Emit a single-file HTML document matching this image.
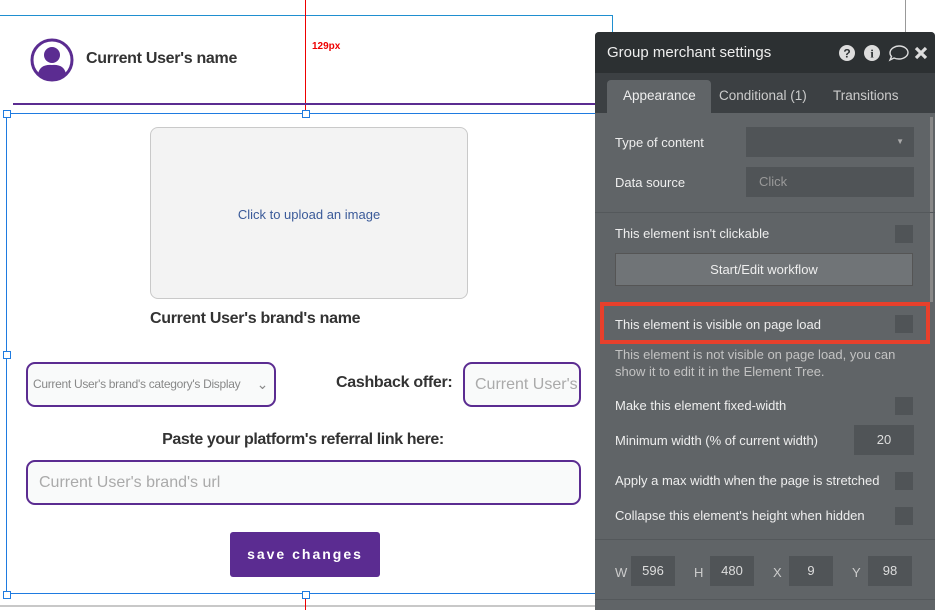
<!DOCTYPE html><html><head><style>
body{margin:0;width:943px;height:610px;position:relative;overflow:hidden;background:#fff;font-family:"Liberation Sans",sans-serif}
.a{position:absolute}
.p{font-family:"Liberation Sans",sans-serif;font-size:13px;color:#eee}
.cb{position:absolute;width:18px;height:18px;background:#505457}
.in{position:absolute;background:#505457;color:#ddd;font-size:13px;text-align:center;line-height:30px}
.pi{border:2px solid #5b2c91;border-radius:9px;box-sizing:border-box;background:#f9fafa}
</style></head><body>
<div class="a" style="left:0;top:15px;width:613px;height:1px;background:#1f8fd0"></div>
<div class="a" style="left:612px;top:15px;width:1px;height:592px;background:#1f8fd0"></div>
<div class="a" style="left:0;top:605px;width:613px;height:2px;background:#c8c8c8"></div>
<div class="a" style="left:905px;top:0;width:1px;height:32px;background:#999"></div>
<div class="a" style="left:305px;top:0;width:1px;height:113px;background:#e00"></div>
<div class="a" style="left:305px;top:594px;width:1px;height:16px;background:#e00"></div>
<div class="a" style="left:312px;top:41px;font-size:10px;color:#e00;font-weight:bold">129px</div>
<svg class="a" style="left:30px;top:38px" width="44" height="44" viewBox="0 0 44 44"><circle cx="22" cy="22" r="20" fill="#fff" stroke="#5b2c91" stroke-width="3"/><circle cx="22" cy="17" r="8" fill="#5b2c91"/><path d="M8 36 Q10 26 22 27 Q34 26 36 36 Q30 42 22 42 Q14 42 8 36Z" fill="#5b2c91"/></svg>
<div class="a" style="left:86px;top:50px;font-size:16px;color:#333;font-weight:bold;letter-spacing:-0.3px">Current User's name</div>
<div class="a" style="left:13px;top:103px;width:595px;height:2px;background:#5b2c91"></div>
<div class="a" style="left:6px;top:113px;width:600px;height:481px;border:1px solid #1f7be0;box-sizing:border-box"></div>
<div class="a" style="left:3px;top:110px;width:6px;height:6px;border:1px solid #1f7be0;background:#fff"></div>
<div class="a" style="left:302px;top:110px;width:6px;height:6px;border:1px solid #1f7be0;background:#fff"></div>
<div class="a" style="left:3px;top:351px;width:6px;height:6px;border:1px solid #1f7be0;background:#fff"></div>
<div class="a" style="left:3px;top:591px;width:6px;height:6px;border:1px solid #1f7be0;background:#fff"></div>
<div class="a" style="left:302px;top:591px;width:6px;height:6px;border:1px solid #1f7be0;background:#fff"></div>
<div class="a" style="left:150px;top:127px;width:318px;height:172px;background:#f3f3f3;border:1px solid #c9c9c9;border-radius:8px;box-sizing:border-box;text-align:center;line-height:174px;font-size:13px;color:#3a5a99">Click to upload an image</div>
<div class="a" style="left:150px;top:310px;font-size:16px;color:#333;font-weight:bold;letter-spacing:-0.3px">Current User's brand's name</div>
<div class="a pi" style="left:26px;top:362px;width:250px;height:45px;font-size:12px;color:#888;line-height:41px;padding-left:5px;letter-spacing:-0.3px">Current User's brand's category's Display<span style="position:absolute;right:6px;font-size:14px">⌄</span></div>
<div class="a" style="left:336px;top:374px;font-size:16px;color:#333;font-weight:bold;letter-spacing:-0.3px">Cashback offer:</div>
<div class="a pi" style="left:463px;top:362px;width:118px;height:45px;font-size:16px;color:#aaa;line-height:41px;padding-left:10px;overflow:hidden;white-space:nowrap">Current User's</div>
<div class="a" style="left:0;width:606px;top:431px;text-align:center;font-size:16px;color:#333;font-weight:bold;letter-spacing:-0.4px">Paste your platform's referral link here:</div>
<div class="a pi" style="left:26px;top:460px;width:555px;height:45px;font-size:16px;color:#aaa;line-height:41px;padding-left:11px">Current User's brand's url</div>
<div class="a" style="left:230px;top:532px;width:150px;height:45px;background:#5b2c91;border-radius:3px;color:#fff;text-align:center;line-height:45px;font-size:14px;letter-spacing:2px;font-weight:bold">save changes</div>

<div class="a p" style="left:595px;top:32px;width:340px;height:578px;background:#606467;border-radius:4px 4px 0 0;overflow:hidden">
<div class="a" style="left:0;top:0;width:340px;height:41px;background:#2c3032"></div>
<div class="a" style="left:12px;top:12px;font-size:15px;color:#eee">Group merchant settings</div>
<svg class="a" style="left:244px;top:12px" width="92" height="18" viewBox="0 0 92 18">
<circle cx="8" cy="9" r="8" fill="#ddd"/><text x="8" y="13.5" font-size="12" font-weight="bold" text-anchor="middle" fill="#2c3032" font-family="Liberation Sans">?</text>
<circle cx="33" cy="9" r="8" fill="#ddd"/><text x="33" y="13.5" font-size="12" font-weight="bold" text-anchor="middle" fill="#2c3032" font-family="Liberation Serif">i</text>
<path d="M51 9 C51 4 57 2 60 2 C65 2 69 5 69 8.5 C69 12 65 15 60 15 C58 15 56 14.5 55 14 L51 16 L52.5 12.5 C51.5 11.5 51 10 51 9Z" fill="none" stroke="#ddd" stroke-width="1.4"/>
<path d="M77 4 L87 14 M87 4 L77 14" stroke="#ddd" stroke-width="3.2"/>
</svg>
<div class="a" style="left:0;top:41px;width:340px;height:40px;background:#3c4043"></div>
<div class="a" style="left:12px;top:48px;width:104px;height:33px;background:#606467;border-radius:4px 4px 0 0"></div>
<div class="a" style="left:28px;top:56px;font-size:13.5px">Appearance</div>
<div class="a" style="left:124px;top:56px;font-size:13.5px;color:#ccc">Conditional (1)</div>
<div class="a" style="left:238px;top:56px;font-size:13.5px;color:#ccc">Transitions</div>
<div class="a" style="left:335px;top:85px;width:3px;height:185px;background:#888"></div>
<div class="a" style="left:20px;top:103px">Type of content</div>
<div class="in" style="left:151px;top:95px;width:168px;height:30px"><span style="position:absolute;right:10px;top:0;font-size:8px;color:#aaa">▼</span></div>
<div class="a" style="left:20px;top:143px">Data source</div>
<div class="in" style="left:151px;top:135px;width:168px;height:30px;text-align:left;color:#999;padding-left:13px;box-sizing:border-box">Click</div>
<div class="a" style="left:0;top:180px;width:340px;height:1px;background:#54585b"></div>
<div class="a" style="left:20px;top:194px">This element isn't clickable</div>
<div class="cb" style="left:300px;top:193px"></div>
<div class="a" style="left:20px;top:221px;width:298px;height:33px;background:#707477;border:1px solid #555;box-sizing:border-box;text-align:center;line-height:31px">Start/Edit workflow</div>
<div class="a" style="left:5px;top:270px;width:330px;height:42px;border:4px solid #e8402b;box-sizing:border-box"></div>
<div class="a" style="left:20px;top:285px">This element is visible on page load</div>
<div class="cb" style="left:300px;top:283px"></div>
<div class="a" style="left:20px;top:314px;color:#c3c3c3;line-height:17px;width:290px">This element is not visible on page load, you can show it to edit it in the Element Tree.</div>
<div class="a" style="left:20px;top:366px">Make this element fixed-width</div>
<div class="cb" style="left:300px;top:365px"></div>
<div class="a" style="left:20px;top:401px">Minimum width (% of current width)</div>
<div class="in" style="left:259px;top:393px;width:60px;height:30px">20</div>
<div class="a" style="left:20px;top:441px">Apply a max width when the page is stretched</div>
<div class="cb" style="left:300px;top:440px"></div>
<div class="a" style="left:20px;top:476px">Collapse this element's height when hidden</div>
<div class="cb" style="left:300px;top:475px"></div>
<div class="a" style="left:0;top:507px;width:340px;height:1px;background:#54585b"></div>
<div class="a" style="left:20px;top:533px;color:#ccc">W</div><div class="in" style="left:36px;top:524px;width:44px;height:30px">596</div>
<div class="a" style="left:99px;top:533px;color:#ccc">H</div><div class="in" style="left:115px;top:524px;width:44px;height:30px">480</div>
<div class="a" style="left:178px;top:533px;color:#ccc">X</div><div class="in" style="left:194px;top:524px;width:44px;height:30px">9</div>
<div class="a" style="left:257px;top:533px;color:#ccc">Y</div><div class="in" style="left:273px;top:524px;width:44px;height:30px">98</div>
<div class="a" style="left:0;top:567px;width:340px;height:1px;background:#54585b"></div>
</div>
</body></html>
